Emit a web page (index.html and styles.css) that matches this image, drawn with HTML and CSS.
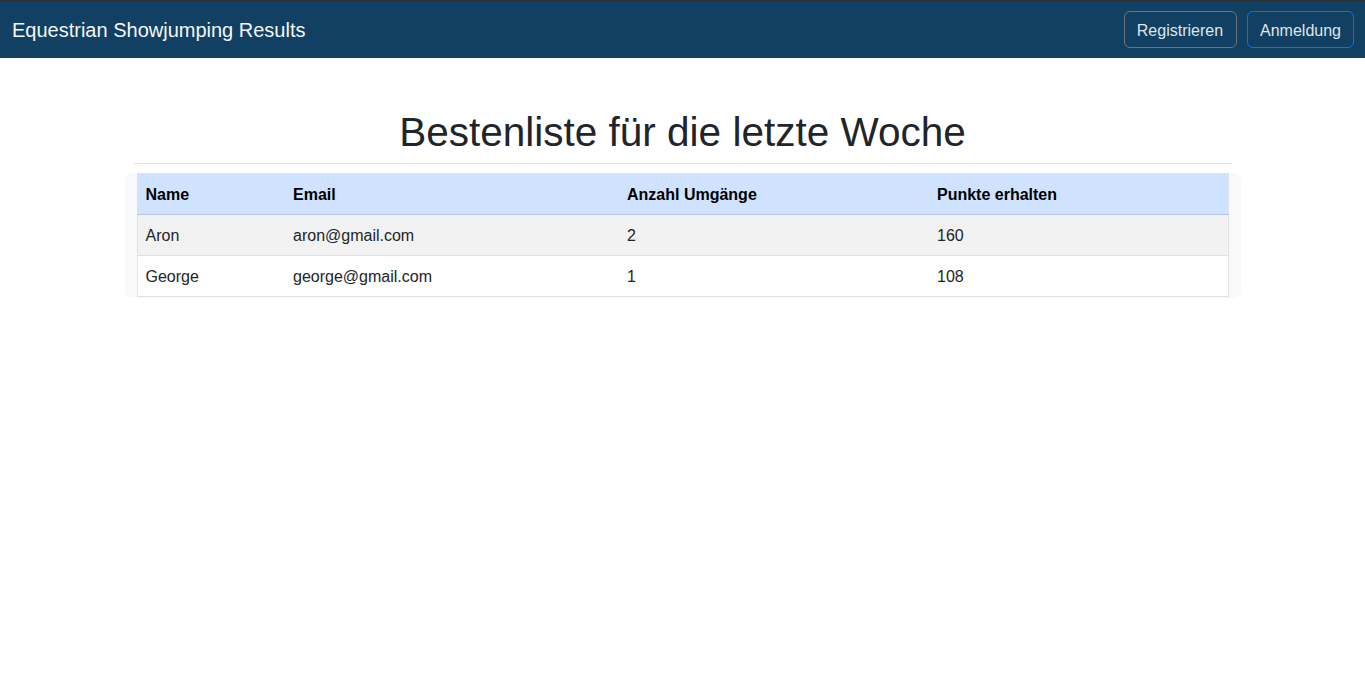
FILE: index.html
```html
<!DOCTYPE html>
<html lang="de">
<head>
<meta charset="utf-8">
<title>Equestrian Showjumping Results</title>
<link rel="stylesheet" href="styles.css">
</head>
<body>
<nav class="navbar">
  <a class="brand" href="#">Equestrian Showjumping Results</a>
  <div class="nav-actions">
    <a class="btn btn-secondary" href="#">Registrieren</a>
    <a class="btn btn-primary" href="#">Anmeldung</a>
  </div>
</nav>
<main class="container">
  <h1 class="title">Bestenliste für die letzte Woche</h1>
  <hr class="divider">
  <div class="panel">
    <table class="table">
      <colgroup>
        <col class="c1"><col class="c2"><col class="c3"><col class="c4">
      </colgroup>
      <thead>
        <tr><th>Name</th><th>Email</th><th>Anzahl Umgänge</th><th>Punkte erhalten</th></tr>
      </thead>
      <tbody>
        <tr class="odd"><td>Aron</td><td>aron@gmail.com</td><td>2</td><td>160</td></tr>
        <tr><td>George</td><td>george@gmail.com</td><td>1</td><td>108</td></tr>
      </tbody>
    </table>
  </div>
</main>
</body>
</html>
```
FILE: styles.css
```css
* { box-sizing: border-box; }
html, body { margin: 0; padding: 0; }
body {
  font-family: "Liberation Sans", Arial, sans-serif;
  font-size: 16px;
  line-height: 1.5;
  color: #212529;
  background: #fff;
}
.navbar {
  height: 58px;
  border-top: 1px solid #2e3236;
  background: #114062;
  display: flex;
  align-items: center;
  justify-content: space-between;
  padding: 0 11px 0 12px;
}
.brand {
  color: #f4f6f8;
  font-size: 20px;
  text-decoration: none;
}
.nav-actions { display: flex; gap: 10px; }
.btn {
  display: inline-block;
  height: 37px;
  line-height: 35px;
  padding: 1px 12px 0 12px;
  border-radius: 6px;
  font-size: 16px;
  color: #dfe5ea;
  text-decoration: none;
  border: 1px solid #6c757d;
}
.btn-secondary { padding: 1px 13px 0 12px; }
.btn-primary { border-color: #0d6efd; }
.container {
  width: 1116px;
  margin: 0 auto;
}
.title {
  margin: 50px 0 0;
  text-align: center;
  font-size: 40.5px;
  font-weight: 400;
  line-height: 48px;
  color: #212529;
}
.divider {
  margin: 7px 9px 9px;
  border: 0;
  border-top: 1px solid #dee2e6;
}
.panel {
  background: #f8f9fa;
  border-radius: 8px;
  padding: 0 13px 1px 12px;
}
.table {
  width: 100%;
  border-collapse: collapse;
  table-layout: fixed;
  border: 1px solid #dee2e6;
}
.c1 { width: 148px; }
.c2 { width: 334px; }
.c3 { width: 310px; }
.c4 { width: 299px; }
.table th, .table td {
  text-align: left;
  padding: 9px 8px 7px;
  height: 41px;
  border-bottom: 1px solid #dee2e6;
  vertical-align: top;
}
.table th { font-weight: 700; color: #000; }
.table thead tr { background: #cfe2ff; }
.table thead th { border-bottom-color: #b4c7e7; }
.table tbody tr { background: #fff; }
.table tbody tr.odd { background: #f2f2f2; }
.table td { color: #212529; }
```
